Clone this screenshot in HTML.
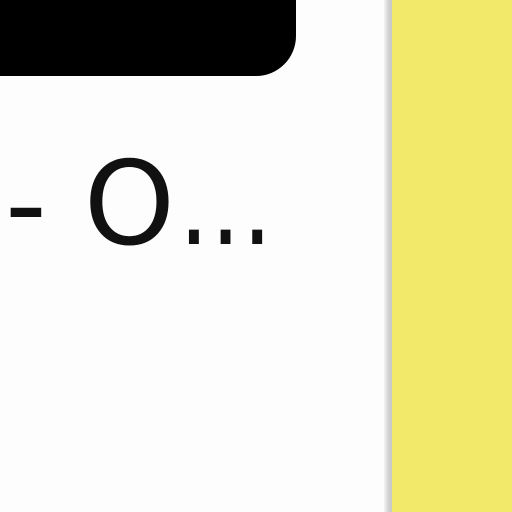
<!DOCTYPE html>
<html><head><style>
html,body{margin:0;padding:0;width:512px;height:512px;overflow:hidden;background:#fdfdfd;}
.blk{position:absolute;left:-40px;top:-60px;width:336px;height:136px;background:#000;border-radius:40px;}
.txt{position:absolute;left:5px;top:147px;font-family:"DejaVu Sans",sans-serif;font-size:116px;line-height:116px;color:#111;white-space:nowrap;}
.el{display:inline-block;transform:scaleX(0.82);transform-origin:left;margin-left:3px;}
.line{position:absolute;left:384px;top:0;width:8px;height:512px;background:linear-gradient(90deg,#f5f5f5,#d0d0d0 60%,#c8c8c8);}
.yel{position:absolute;left:392px;top:0;width:120px;height:512px;background:#f2e86a;}
</style></head><body>
<div class="blk"></div>
<div class="txt">- O<span class="el">…</span></div>
<div class="line"></div>
<div class="yel"></div>
</body></html>
